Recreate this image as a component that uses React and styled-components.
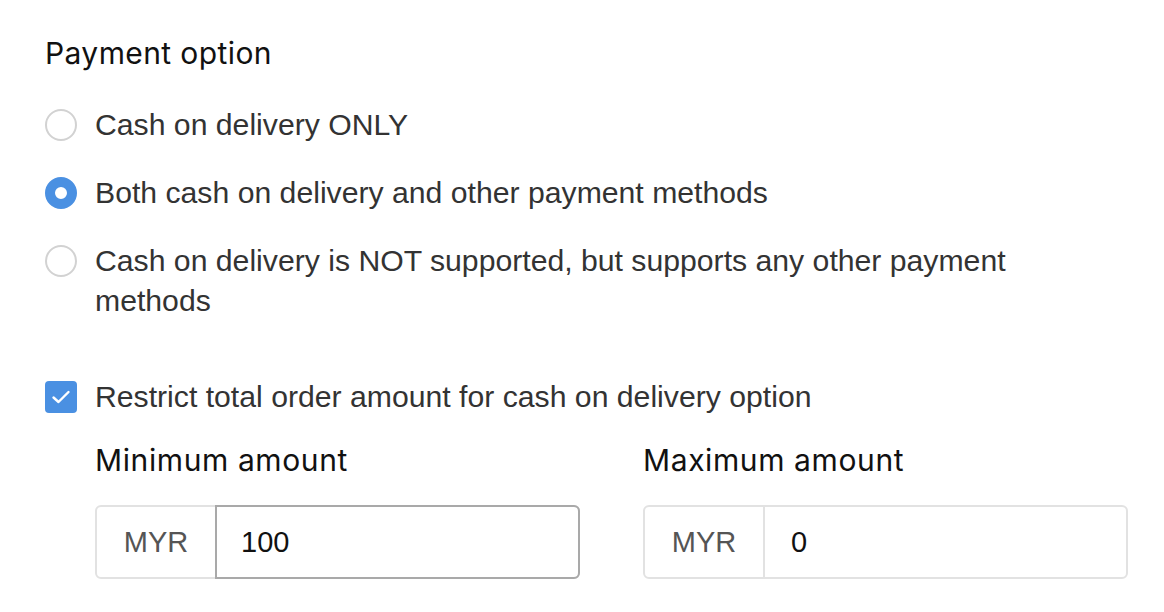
import React, { useState } from 'react'
import styled, { createGlobalStyle } from 'styled-components'

const GlobalStyle = createGlobalStyle`
  body {
    margin: 0;
    background: #ffffff;
    font-family: "Liberation Sans", Arial, sans-serif;
  }
`

const Page = styled.div`
  width: 1164px;
  height: 612px;
  padding: 35px 36px 0 45px;
  box-sizing: border-box;
  overflow: hidden;
`

const Title = styled.h2`
  margin: 0;
  font-family: Inter, Lato, sans-serif;
  font-weight: 400;
  font-size: 30px;
  letter-spacing: 0.4px;
  line-height: 36px;
  color: #111111;
`

const OptionList = styled.div`
  display: flex;
  flex-direction: column;
  gap: 28px;
  margin-top: 34px;
`

const Option = styled.label`
  display: flex;
  align-items: flex-start;
  gap: 18px;
  cursor: pointer;
`

const RadioDot = styled.span`
  flex: none;
  width: 32px;
  height: 32px;
  margin-top: 4px;
  border-radius: 50%;
  box-sizing: border-box;
  border: ${p => (p.checked ? '10px solid #4a90e2' : '2px solid #d2d2d2')};
  background: #fff;
`

const OptionText = styled.span`
  max-width: 960px;
  font-size: 30.2px;
  line-height: 40px;
  color: #333333;
`

const CheckRow = styled.label`
  display: flex;
  align-items: center;
  gap: 18px;
  margin-top: 56px;
  cursor: pointer;
`

const CheckBox = styled.span`
  flex: none;
  width: 32px;
  height: 32px;
  border-radius: 4px;
  background: ${p => (p.checked ? '#4a90e2' : '#fff')};
  border: ${p => (p.checked ? 'none' : '2px solid #d2d2d2')};
  display: flex;
  align-items: center;
  justify-content: center;
`

const Fields = styled.div`
  display: grid;
  grid-template-columns: 485px 485px;
  column-gap: 63px;
  margin: 25px 0 0 50px;
`

const Field = styled.div`
  display: flex;
  flex-direction: column;
  gap: 27px;
`

const FieldLabel = styled.div`
  font-family: Inter, Lato, sans-serif;
  font-weight: 400;
  font-size: 30px;
  letter-spacing: 0.6px;
  line-height: 36px;
  color: #111111;
`

const InputGroup = styled.div`
  display: flex;
  height: 74px;
  box-sizing: border-box;
  border: 2px solid #e2e2e2;
  border-radius: 6px;
  background: #fff;
`

const Prefix = styled.div`
  flex: none;
  width: 118px;
  display: flex;
  align-items: center;
  justify-content: center;
  font-size: 29px;
  color: #555555;
  border-right: 2px solid #e2e2e2;
`

const Value = styled.input`
  flex: 1;
  min-width: 0;
  border: 2px solid ${p => (p.focused ? '#a9a9a9' : 'transparent')};
  margin: ${p => (p.focused ? '-2px -2px -2px -2px' : '0')};
  border-radius: 0 6px 6px 0;
  padding: 0 0 0 24px;
  font-family: "Liberation Sans", Arial, sans-serif;
  font-size: 29px;
  color: #111111;
  background: transparent;
  outline: none;
`

const options = [
  'Cash on delivery ONLY',
  'Both cash on delivery and other payment methods',
  'Cash on delivery is NOT supported, but supports any other payment methods',
]

const App = () => {
  const [selected, setSelected] = useState(1)
  const [restrict, setRestrict] = useState(true)
  const [min, setMin] = useState('100')
  const [max, setMax] = useState('0')

  return (
    <Page>
      <GlobalStyle />
      <Title>Payment option</Title>
      <OptionList>
        {options.map((text, i) => (
          <Option key={i} onClick={() => setSelected(i)}>
            <RadioDot checked={selected === i} />
            <OptionText>{text}</OptionText>
          </Option>
        ))}
      </OptionList>

      <CheckRow onClick={() => setRestrict(!restrict)}>
        <CheckBox checked={restrict}>
          {restrict && (
            <svg width="20" height="16" viewBox="0 0 20 16" fill="none">
              <path d="M2.5 8.5 L7.5 13 L17.5 3" stroke="#fff" strokeWidth="2.4" strokeLinecap="round" strokeLinejoin="round" />
            </svg>
          )}
        </CheckBox>
        <OptionText>Restrict total order amount for cash on delivery option</OptionText>
      </CheckRow>

      <Fields>
        <Field>
          <FieldLabel>Minimum amount</FieldLabel>
          <InputGroup>
            <Prefix>MYR</Prefix>
            <Value focused value={min} onChange={e => setMin(e.target.value)} />
          </InputGroup>
        </Field>
        <Field>
          <FieldLabel>Maximum amount</FieldLabel>
          <InputGroup>
            <Prefix>MYR</Prefix>
            <Value value={max} onChange={e => setMax(e.target.value)} />
          </InputGroup>
        </Field>
      </Fields>
    </Page>
  )
}

export default App
